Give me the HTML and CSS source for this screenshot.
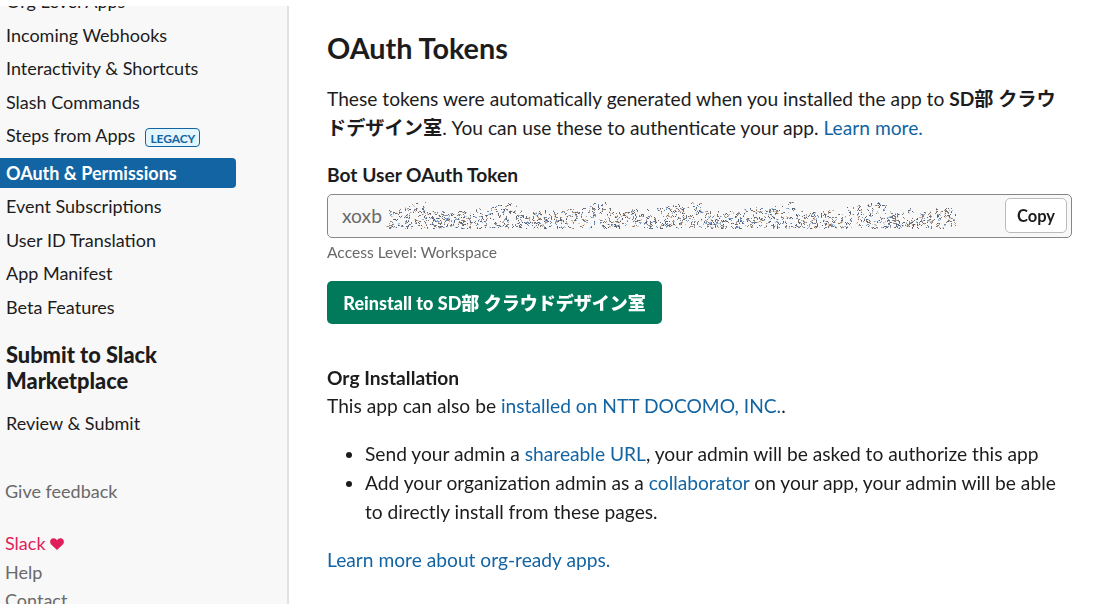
FILE: index.html
```html
<!DOCTYPE html>
<html lang="en">
<head>
  <meta charset="UTF-8">
  <meta name="viewport" content="width=device-width, initial-scale=1.0">
  <title>OAuth &amp; Permissions</title>
  <link rel="stylesheet" href="styles.css">
</head>
<body>
  <div class="page">
    <aside class="sidebar">
      <ul class="nav">
        <li>Org Level Apps</li>
        <li>Incoming Webhooks</li>
        <li>Interactivity &amp; Shortcuts</li>
        <li>Slash Commands</li>
        <li class="with-badge">Steps from Apps <span class="badge">LEGACY</span></li>
        <li class="active">OAuth &amp; Permissions</li>
        <li>Event Subscriptions</li>
        <li>User ID Translation</li>
        <li>App Manifest</li>
        <li>Beta Features</li>
      </ul>
      <h3>Submit to Slack Marketplace</h3>
      <ul class="nav">
        <li>Review &amp; Submit</li>
      </ul>
      <div class="footer">
        <div class="feedback">Give feedback</div>
        <div class="slack">Slack
          <svg class="heart" viewBox="0 0 14 12"><path d="M7 12 L1.2 6.4 C-0.6 4.4 0 1.6 1.8 0.7 C3.8 -0.3 6 0.5 7 2.3 C8 0.5 10.2 -0.3 12.2 0.7 C14 1.6 14.6 4.4 12.8 6.4 Z"/></svg>
        </div>
        <div>Help</div>
        <div>Contact</div>
      </div>
    </aside>

    <main class="content">
      <h2>OAuth Tokens</h2>
      <p class="intro">These tokens were automatically generated when you installed the app to <strong>SD部 クラウドデザイン室</strong>. You can use these to authenticate your app. <a>Learn more.</a></p>

      <h4>Bot User OAuth Token</h4>
      <div class="token">
        <span class="prefix">xoxb</span>
        <canvas id="scramble" width="576" height="32"></canvas>
        <button class="copy">Copy</button>
      </div>
      <div class="hint">Access Level: Workspace</div>

      <button class="reinstall">Reinstall to SD部 クラウドデザイン室</button>

      <h4 class="org">Org Installation</h4>
      <p class="org-text">This app can also be <a>installed on NTT DOCOMO, INC.</a>.</p>
      <ul class="steps">
        <li>Send your admin a <a>shareable URL</a>, your admin will be asked to authorize this app</li>
        <li>Add your organization admin as a <a>collaborator</a> on your app, your admin will be able to directly install from these pages.</li>
      </ul>
      <p class="more"><a>Learn more about org-ready apps.</a></p>
    </main>
  </div>

  <script>
    // scrambled token: small curled flecks scattered along a wavy band
    const ctx = document.getElementById("scramble").getContext("2d");
    const colors = ["#5d6270", "#77777c", "#8a7468", "#b99a80", "#6a8fc0", "#9cc0e2", "#4f5d80", "#e2ccb0"];
    let seed = 7;

    function rand() {
      seed = (seed * 16807) % 2147483647;
      return seed / 2147483647;
    }

    function bandTop(x) {
      const wave = ((x + 52) % 92) / 92;
      return 11 - 11 * wave * wave;
    }

    for (let i = 0; i < 1350; i++) {
      let x = 3 + rand() * 566;
      const top = bandTop(x);
      let y = top + Math.pow(rand(), 0.85) * (28 - top);
      let angle = rand() * Math.PI * 2;
      const turn = rand() * 1.6 - 0.8;
      const steps = 1 + Math.floor(rand() * 4);
      for (let s = 0; s < steps; s++) {
        ctx.fillStyle = colors[Math.floor(rand() * colors.length)];
        if (y < 28.5) {
          ctx.fillRect(Math.round(x), Math.round(y), 1, 1);
        }
        x += Math.cos(angle);
        y += Math.sin(angle);
        angle += turn;
      }
    }
  </script>
</body>
</html>
```

FILE: styles.css
```css
:root {
  --text: #1d1c1d;
  --link: #1264a3;
  --muted: #696969;
  --green: #007a5a;
  --side: #f8f8f8;
}

* {
  box-sizing: border-box;
}

body {
  margin: 0;
  background: #fff;
  color: var(--text);
  font-family: Lato, "Noto Sans CJK JP", sans-serif;
  font-size: 19.2px;
  line-height: 28.8px;
}

h2, h3, h4, p, ul {
  margin: 0;
  padding: 0;
}

.page {
  display: flex;
  height: 604px;
  padding-top: 6px;
  overflow: hidden;
}

.sidebar {
  width: 289px;
  flex: none;
  background: var(--side);
  border-right: 2px solid #e2e2e2;
  font-size: 18px;
  overflow: hidden;
}

.nav {
  list-style: none;
}

.nav:first-child {
  margin-top: -20px;
}

.nav li {
  width: 236px;
  height: 30px;
  margin-bottom: 3.6px;
  padding-left: 6px;
  line-height: 30px;
  border-radius: 0 4px 4px 0;
}

.nav .with-badge {
  display: flex;
  gap: 10px;
  height: 33.6px;
}

.badge {
  height: 19px;
  margin-top: 8px;
  padding: 0 4px;
  border: 1px solid var(--link);
  border-radius: 4px;
  background: #e3f6fd;
  color: var(--link);
  font-size: 12px;
  font-weight: bold;
  letter-spacing: -0.1px;
  line-height: 19px;
}

.nav .active {
  background: var(--link);
  color: #fff;
  font-weight: bold;
}

.sidebar h3 {
  width: 200px;
  margin: 20px 0 13px;
  padding-left: 6px;
  font-size: 21.8px;
  font-weight: 900;
  line-height: 26.5px;
}

.footer {
  padding-left: 5px;
  color: var(--muted);
}

.feedback {
  margin: 39.5px 0 22.5px;
}

.slack {
  color: #e01e5a;
}

.heart {
  width: 14px;
  height: 12px;
  fill: #e01e5a;
}

.content {
  width: 745px;
  margin-left: 38px;
}

a {
  color: var(--link);
}

h2 {
  margin-top: 25px;
  font-size: 28.8px;
  line-height: 35px;
}

.intro {
  margin-top: 19px;
}

h4 {
  margin-top: 18px;
  font-size: 19.2px;
  line-height: 28px;
}

.token {
  display: flex;
  align-items: center;
  height: 44px;
  margin-top: 5.4px;
  padding: 0 4px 0 14px;
  border: 1px solid #868686;
  border-radius: 5px;
  background: var(--side);
}

.prefix {
  width: 44px;
  color: var(--muted);
}

.copy {
  width: 62px;
  height: 35px;
  margin-left: auto;
  padding: 0;
  border: 1px solid #bbb;
  border-radius: 5px;
  background: #fff;
  color: var(--text);
  font: bold 16.5px Lato, sans-serif;
}

.hint {
  margin-top: 2px;
  color: var(--muted);
  font-size: 15.6px;
  line-height: 24px;
}

.reinstall {
  display: block;
  width: 335px;
  height: 43px;
  margin-top: 17.5px;
  padding: 0 0 2px;
  border: 0;
  border-radius: 5px;
  background: var(--green);
  color: #fff;
  font: 900 18px Lato, "Noto Sans CJK JP", sans-serif;
}

.org {
  margin-top: 39.5px;
}

.org-text {
  margin-top: 0.5px;
}

.steps {
  margin-top: 19px;
  padding-left: 38px;
}

.more {
  margin-top: 19.5px;
}
```
